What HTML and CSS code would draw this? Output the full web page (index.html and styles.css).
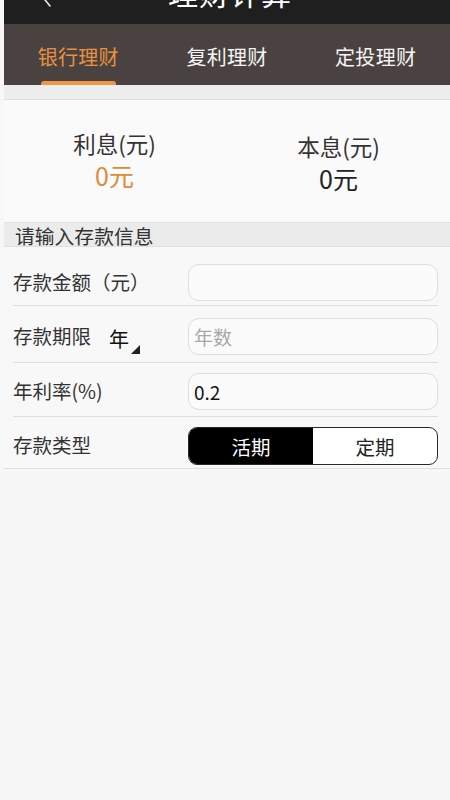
FILE: index.html
```html
<!DOCTYPE html>
<html lang="zh-CN">
<head>
<meta charset="utf-8">
<title>理财计算</title>
<link rel="stylesheet" href="styles.css">
</head>
<body>
<div class="page">
  <header class="titlebar">
    <svg class="back" width="14" height="26" viewBox="0 0 14 26"><path d="M11 2 L2 13 L11 24" fill="none" stroke="#e8e8e8" stroke-width="1.6" stroke-linecap="round"/></svg>
    <h1 class="title">理财计算</h1>
  </header>
  <nav class="tabs">
    <div class="tab active">银行理财</div>
    <div class="tab">复利理财</div>
    <div class="tab">定投理财</div>
  </nav>
  <div class="band"></div>
  <section class="summary">
    <div class="sum-col">
      <div class="sum-label">利息(元)</div>
      <div class="sum-value orange">0元</div>
    </div>
    <div class="sum-col lower">
      <div class="sum-label">本息(元)</div>
      <div class="sum-value">0元</div>
    </div>
  </section>
  <div class="section-head">请输入存款信息</div>
  <div class="form">
    <div class="row first">
      <div class="label">存款金额（元）</div>
      <input class="field" type="text" value="">
    </div>
    <div class="row second">
      <div class="label">存款期限<span class="unit">年<span class="tri"></span></span></div>
      <input class="field" type="text" placeholder="年数">
    </div>
    <div class="row">
      <div class="label">年利率(%)</div>
      <input class="field" type="text" value="0.2">
    </div>
    <div class="row last">
      <div class="label">存款类型</div>
      <div class="segment">
        <div class="seg on">活期</div>
        <div class="seg">定期</div>
      </div>
    </div>
  </div>
</div>
</body>
</html>
```
FILE: styles.css
```css
* { box-sizing: border-box; }
html, body { margin: 0; padding: 0; }
body {
  background: #f7f7f7;
  font-family: "Noto Sans CJK SC", "Noto Sans", sans-serif;
  color: #333;
  width: 450px;
  height: 800px;
  overflow: hidden;
}
.page { padding-left: 4px; }
.titlebar {
  height: 24px;
  background: #1f1f1f;
  overflow: hidden;
  display: flex;
  justify-content: center;
  position: relative;
}
.back { position: absolute; left: 35px; top: -18px; }
.title {
  margin: -25px 0 0 6px;
  font-size: 30px;
  line-height: 34px;
  font-weight: 400;
  color: #fff;
  letter-spacing: 1px;
}
.tabs {
  height: 61px;
  background: #4a4240;
  display: grid;
  grid-template-columns: repeat(3, 1fr);
}
.tab {
  display: flex;
  align-items: center;
  justify-content: center;
  padding-top: 3px;
  font-size: 20px;
  color: #f4f4f4;
  position: relative;
  letter-spacing: 0.3px;
}
.tab.active { color: #e8913c; }
.tab.active::after {
  content: "";
  position: absolute;
  left: 37px;
  width: 75px;
  bottom: 0;
  height: 4px;
  border-radius: 3px 3px 0 0;
  background: #ef9742;
}
.band { height: 14px; background: #ededed; }
.summary {
  height: 123px;
  background: #fafafa;
  border-top: 1px solid #e0e0e0;
  display: grid;
  grid-template-columns: 1fr 1fr;
  padding-top: 28px;
}
.sum-col { text-align: center; }
.sum-col:first-child { padding-right: 2px; }
.sum-col.lower { padding-top: 3px; }
.sum-label { font-size: 22.5px; line-height: 30px; color: #333; }
.sum-value { font-size: 25px; line-height: 34px; color: #222; }
.sum-value.orange { color: #e08a38; }
.section-head {
  height: 25px;
  background: #ebebeb;
  border-top: 1px solid #e2e2e2;
  border-bottom: 1px solid #e0e0e0;
  padding-left: 11px;
  font-size: 19.8px;
  line-height: 25px;
  color: #333;
}
.form {
  background: #f8f8f8;
  border-bottom: 1px solid #dedede;
}
.row {
  display: flex;
  align-items: center;
  margin: 0 12px 0 9px;
  padding: 10px 0 6px;
  border-bottom: 1px solid #dedede;
}
.row.first { padding-top: 17px; padding-bottom: 4px; }
.row.second { padding-top: 12px; padding-bottom: 7px; }
.row.last { border-bottom: none; padding-bottom: 3px; }
.label {
  width: 175px;
  flex: none;
  font-size: 19.5px;
  color: #333;
  display: flex;
  align-items: center;
  margin-top: -3px;
}
.unit {
  position: relative;
  margin-left: 18px;
  font-size: 20px;
  color: #111;
  padding-top: 7px;
}
.tri {
  position: absolute;
  right: -11px;
  bottom: -1px;
  width: 0;
  height: 0;
  border-left: 9px solid transparent;
  border-bottom: 9px solid #222;
}
.field {
  flex: 1;
  height: 37px;
  border: 1px solid #dedede;
  border-radius: 11px;
  background: #fbfbfb;
  font-family: "Noto Sans CJK SC", "Noto Sans", sans-serif;
  font-size: 19px;
  color: #111;
  padding: 0 5px;
  outline: none;
}
.field::placeholder { color: #a8a8a8; }
.segment {
  flex: 1;
  height: 38px;
  display: grid;
  grid-template-columns: 1fr 1fr;
  border: 1.5px solid #2a2a2a;
  border-radius: 9px;
  overflow: hidden;
  background: #fff;
}
.seg {
  display: flex;
  align-items: center;
  justify-content: center;
  font-size: 19.5px;
  color: #222;
}
.seg.on { background: #000; color: #fff; }
```
